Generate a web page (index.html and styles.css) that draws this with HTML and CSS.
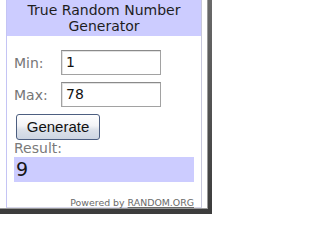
FILE: index.html
```html
<!DOCTYPE html>
<html>
<head>
<meta charset="utf-8">
<link rel="stylesheet" href="styles.css">
</head>
<body>
<div class="shot">
  <div class="frame">
    <div class="widget">
      <div class="header">True Random Number<br>Generator</div>
      <div class="body">
        <div class="row"><span class="label">Min:</span><div class="field">1</div></div>
        <div class="row"><span class="label">Max:</span><div class="field">78</div></div>
        <div class="btn-row"><div class="button">Generate</div></div>
        <div class="result-label">Result:</div>
        <div class="result">9</div>
        <div class="powered">Powered by <span class="link">RANDOM.ORG</span></div>
      </div>
    </div>
  </div>
</div>
</body>
</html>
```
FILE: styles.css
```css
html, body {
  margin: 0;
  padding: 0;
  background: #ffffff;
}
body {
  width: 212px;
  height: 214px;
  overflow: hidden;
}
.shot {
  width: 212px;
  height: 214px;
  background: linear-gradient(to bottom, #6a6a6a, #3c3c3c);
}
.frame {
  width: 208px;
  height: 209px;
  background: #ffffff;
  box-sizing: border-box;
  padding-left: 6px;
  border-right: 1px solid #9a9a9a;
  border-bottom: 1px solid #9a9a9a;
}
.widget {
  width: 196px;
  height: 208px;
  box-sizing: border-box;
  border-left: 1px solid #c4c4f4;
  border-right: 1px solid #c8c8dc;
  border-bottom: 1px solid #d8d8ea;
  font-family: "DejaVu Sans", Verdana, sans-serif;
}
.header {
  height: 36px;
  background: #ccccff;
  color: #1e1e1e;
  font-size: 14px;
  line-height: 16px;
  text-align: center;
  padding-top: 2px;
  box-sizing: border-box;
}
.body {
  padding: 14px 6px 0 7px;
}
.row {
  display: flex;
  align-items: center;
  height: 25px;
  margin-bottom: 7px;
}
.label {
  width: 47px;
  font-size: 14px;
  color: #767676;
}
.field {
  width: 100px;
  height: 25px;
  box-sizing: border-box;
  border: 1px solid #a2a2a2;
  border-top-color: #8a8a8a;
  box-shadow: inset 1px 1px 0 #e2e2e2;
  font-size: 14px;
  line-height: 23px;
  padding-left: 4px;
  color: #111;
}
.btn-row {
  display: flex;
  padding-left: 2px;
}
.button {
  width: 84px;
  height: 26px;
  box-sizing: border-box;
  border: 1px solid #4c5e80;
  border-radius: 3px;
  background: linear-gradient(to bottom, #ffffff 0%, #f2f3f6 45%, #dde2ea 60%, #cdd5e2 100%);
  font-family: "Liberation Sans", Arial, sans-serif;
  font-size: 15px;
  line-height: 24px;
  text-align: center;
  color: #111;
}
.result-label {
  height: 17px;
  font-size: 14px;
  line-height: 17px;
  color: #7a7a7a;
}
.result {
  width: 180px;
  height: 25px;
  background: #ccccff;
  font-size: 19px;
  line-height: 25px;
  padding-left: 2px;
  box-sizing: border-box;
  color: #161616;
}
.powered {
  margin-top: 15px;
  width: 180px;
  text-align: right;
  font-size: 9.4px;
  line-height: 11px;
  color: #6a6a6a;
}
.link {
  text-decoration: underline;
}
```
